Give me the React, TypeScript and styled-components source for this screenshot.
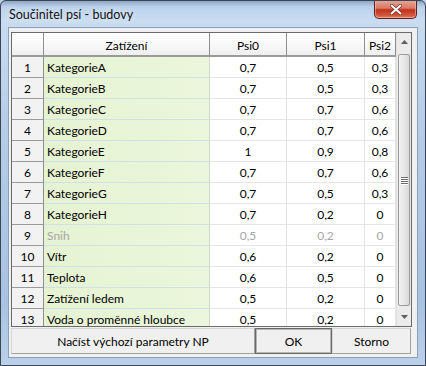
import React from 'react';
import styled, { createGlobalStyle, css } from 'styled-components';

interface Row {
  name: string;
  psi0: string;
  psi1: string;
  psi2: string;
  disabled?: boolean;
}

const rows: Row[] = [
  { name: 'KategorieA', psi0: '0,7', psi1: '0,5', psi2: '0,3' },
  { name: 'KategorieB', psi0: '0,7', psi1: '0,5', psi2: '0,3' },
  { name: 'KategorieC', psi0: '0,7', psi1: '0,7', psi2: '0,6' },
  { name: 'KategorieD', psi0: '0,7', psi1: '0,7', psi2: '0,6' },
  { name: 'KategorieE', psi0: '1', psi1: '0,9', psi2: '0,8' },
  { name: 'KategorieF', psi0: '0,7', psi1: '0,7', psi2: '0,6' },
  { name: 'KategorieG', psi0: '0,7', psi1: '0,5', psi2: '0,3' },
  { name: 'KategorieH', psi0: '0,7', psi1: '0,2', psi2: '0' },
  { name: 'Snih', psi0: '0,5', psi1: '0,2', psi2: '0', disabled: true },
  { name: 'Vítr', psi0: '0,6', psi1: '0,2', psi2: '0' },
  { name: 'Teplota', psi0: '0,6', psi1: '0,5', psi2: '0' },
  { name: 'Zatížení ledem', psi0: '0,5', psi1: '0,2', psi2: '0' },
  { name: 'Voda o proměnné hloubce', psi0: '0,5', psi1: '0,2', psi2: '0' },
];

const COLS = '32px 166px 77px 78px 31px';

const GlobalStyle = createGlobalStyle`
  html, body {
    margin: 0;
    padding: 0;
    background: #b8cde6;
  }
  body {
    font-family: "Lato", "Liberation Sans", sans-serif;
    font-size: 12px;
    color: #000;
  }
`;

const Window = styled.div`
  width: 426px;
  height: 366px;
  box-sizing: border-box;
  border: 1px solid #3b4654;
  border-radius: 6px 6px 0 0;
  background: linear-gradient(180deg, #8fa6c2 0px, #bcd2ec 6px, #c9dcf1 20px, #b7cde8 120px, #a9c2e1 300px, #bcd1ea 366px);
  display: flex;
  flex-direction: column;
  padding: 0 7px 7px 7px;
  overflow: hidden;
`;

const TitleBar = styled.div`
  height: 26px;
  display: flex;
  align-items: flex-start;
  padding-left: 1px;
`;

const Title = styled.span`
  margin-top: 6px;
  font-family: "Lato", "Liberation Sans", sans-serif;
  font-size: 12.5px;
  color: #111;
  text-shadow: 0 0 6px rgba(255, 255, 255, 0.9);
`;

const CloseButton = styled.div`
  margin-left: auto;
  margin-right: 1px;
  width: 43px;
  height: 19px;
  margin-top: -1px;
  box-sizing: border-box;
  border: 1px solid #5e2219;
  border-top: none;
  border-radius: 0 0 5px 5px;
  background: linear-gradient(180deg, #e9a999 0%, #d97a66 45%, #c1321d 55%, #d2553c 85%, #e7836a 100%);
  box-shadow: inset 0 0 0 1px rgba(255, 200, 190, 0.5);
  display: flex;
  align-items: center;
  justify-content: center;
`;

const Client = styled.div`
  flex: 1;
  display: flex;
  flex-direction: column;
  border: 1px solid #8aa0b8;
  background: #f0f0f0;
  padding: 4px 5px 3px 2px;
  gap: 1px;
`;

const Grid = styled.div`
  height: 295px;
  box-sizing: border-box;
  border: 1px solid #6a6a6a;
  display: flex;
  background: #fff;
  overflow: hidden;
`;

const Table = styled.div`
  width: 384px;
  display: flex;
  flex-direction: column;
`;

const RowLine = styled.div<{ $header?: boolean }>`
  display: grid;
  grid-template-columns: ${COLS};
  height: ${(p) => (p.$header ? '24px' : '21px')};
  flex-shrink: 0;
`;

const cellBase = css`
  box-sizing: border-box;
  display: flex;
  align-items: center;
  white-space: nowrap;
  overflow: hidden;
  font-size: 12px;
`;

const HeadCell = styled.div`
  ${cellBase};
  justify-content: center;
  background: linear-gradient(180deg, #ffffff 0%, #f7f7f7 60%, #efefef 100%);
  border-right: 1px solid #8f8f8f;
  border-bottom: 2px solid #9a9a9a;
  padding-top: 2px;
`;

const NumCell = styled.div`
  ${cellBase};
  justify-content: center;
  background: #f2f2f2;
  border-right: 1px solid #8f8f8f;
  border-bottom: 1px solid #9a9a9a;
`;

const NameCell = styled.div<{ $disabled?: boolean }>`
  ${cellBase};
  padding-left: 3px;
  background: linear-gradient(90deg, #e6f3d2 0%, #ebf6dc 100%);
  border-right: 1px solid #cfd8cf;
  border-bottom: 1px solid #cfe0e6;
  color: ${(p) => (p.$disabled ? '#a6a6a6' : '#000')};
`;

const ValueCell = styled.div<{ $disabled?: boolean }>`
  ${cellBase};
  justify-content: center;
  background: #fff;
  border-right: 1px solid #e4e4e4;
  border-bottom: 1px solid #e6e6e6;
  color: ${(p) => (p.$disabled ? '#a6a6a6' : '#000')};
`;

const ScrollBar = styled.div`
  width: 16px;
  display: flex;
  flex-direction: column;
  background: #ebebeb;
  border-left: 1px solid #e0e0e0;
`;

const ArrowBox = styled.div`
  height: 18px;
  display: flex;
  align-items: center;
  justify-content: center;
  flex-shrink: 0;
`;

const Track = styled.div`
  flex: 1;
  display: flex;
  flex-direction: column;
  padding: 3px 1px 2px 1px;
`;

const Thumb = styled.div`
  flex: 1;
  border: 1px solid #9b9b9b;
  border-radius: 2px;
  background: linear-gradient(90deg, #f3f3f3 0%, #e8e8e8 50%, #d8d8d8 100%);
  display: flex;
  align-items: center;
  justify-content: center;
`;

const Grip = styled.div`
  width: 7px;
  display: flex;
  flex-direction: column;
  gap: 1px;
  & > span {
    height: 1px;
    background: #6d6d6d;
    box-shadow: 0 1px 0 #fff;
  }
`;

const ButtonRow = styled.div`
  display: flex;
  height: 26px;
`;

const Button = styled.div<{ $w: number; $default?: boolean }>`
  width: ${(p) => p.$w}px;
  box-sizing: border-box;
  display: flex;
  align-items: center;
  justify-content: center;
  font-size: 12px;
  background: #f0f0f0;
  border: 1px solid #d6d6d6;
  border-right-color: #a0a0a0;
  border-bottom-color: #a0a0a0;
  ${(p) =>
    p.$default &&
    css`
      border: 1px solid #6a6a6a;
      box-shadow: inset 0 0 0 1px #b5b5b5;
    `}
`;

const ArrowUp = () => (
  <svg width="7" height="4" viewBox="0 0 7 4">
    <path d="M0 4 L3.5 0 L7 4 Z" fill="#606060" />
  </svg>
);

const ArrowDown = () => (
  <svg width="7" height="4" viewBox="0 0 7 4">
    <path d="M0 0 L3.5 4 L7 0 Z" fill="#606060" />
  </svg>
);

const CloseIcon = () => (
  <svg width="12" height="11" viewBox="0 0 12 11">
    <path d="M1.5 1.5 L10.5 9.5 M10.5 1.5 L1.5 9.5" stroke="#6b2a20" strokeWidth="3.4" strokeLinecap="round" />
    <path d="M1.5 1.5 L10.5 9.5 M10.5 1.5 L1.5 9.5" stroke="#ffffff" strokeWidth="2" strokeLinecap="round" />
  </svg>
);

const App: React.FC = () => {
  return (
    <>
      <GlobalStyle />
      <Window>
        <TitleBar>
          <Title>Součinitel psí - budovy</Title>
          <CloseButton>
            <CloseIcon />
          </CloseButton>
        </TitleBar>
        <Client>
          <Grid>
            <Table>
              <RowLine $header>
                <HeadCell />
                <HeadCell>Zatížení</HeadCell>
                <HeadCell>Psi0</HeadCell>
                <HeadCell>Psi1</HeadCell>
                <HeadCell>Psi2</HeadCell>
              </RowLine>
              {rows.map((r, i) => (
                <RowLine key={r.name}>
                  <NumCell>{i + 1}</NumCell>
                  <NameCell $disabled={r.disabled}>{r.name}</NameCell>
                  <ValueCell $disabled={r.disabled}>{r.psi0}</ValueCell>
                  <ValueCell $disabled={r.disabled}>{r.psi1}</ValueCell>
                  <ValueCell $disabled={r.disabled}>{r.psi2}</ValueCell>
                </RowLine>
              ))}
            </Table>
            <ScrollBar>
              <ArrowBox>
                <ArrowUp />
              </ArrowBox>
              <Track>
                <Thumb>
                  <Grip>
                    <span />
                    <span />
                    <span />
                    <span />
                  </Grip>
                </Thumb>
              </Track>
              <ArrowBox>
                <ArrowDown />
              </ArrowBox>
            </ScrollBar>
          </Grid>
          <ButtonRow>
            <Button $w={244}>Načíst výchozí parametry NP</Button>
            <Button $w={77} $default>OK</Button>
            <Button $w={79}>Storno</Button>
          </ButtonRow>
        </Client>
      </Window>
    </>
  );
};

export default App;
